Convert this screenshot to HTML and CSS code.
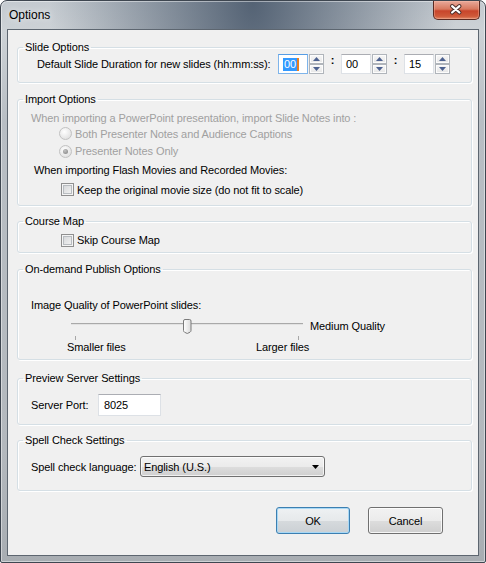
FILE: index.html
```html
<!DOCTYPE html>
<html>
<head>
<meta charset="utf-8">
<title>Options</title>
<link rel="stylesheet" href="styles.css">
</head>
<body>
<div class="window">
  <div class="titlebar">
    <span class="title">Options</span>
    <div class="close">
      <svg width="47" height="19" viewBox="0 0 47 19">
        <path d="M19.5 5 L27 11.5 M27 5 L19.5 11.5" stroke="#4a2d2a" stroke-width="4.2" stroke-linecap="round" fill="none"/>
        <path d="M19.5 5 L27 11.5 M27 5 L19.5 11.5" stroke="#ffffff" stroke-width="2.2" stroke-linecap="round" fill="none"/>
      </svg>
    </div>
  </div>
  <div class="client">
    <fieldset class="group g-slide">
      <legend>Slide Options</legend>
      <div class="gbody">
        <div class="duration-row">
          <span class="dur-label">Default Slide Duration for new slides (hh:mm:ss):</span>
          <div class="spin">
            <div class="spin-input focused"><span class="sel">00</span><span class="caret"></span></div>
            <div class="spin-btns">
              <span class="sb"><svg width="7" height="4" viewBox="0 0 7 4"><path d="M0 4 L3.5 0 L7 4 Z" fill="#4d6290"/></svg></span>
              <span class="sb"><svg width="7" height="4" viewBox="0 0 7 4"><path d="M0 0 L3.5 4 L7 0 Z" fill="#4d6290"/></svg></span>
            </div>
          </div>
          <span class="colon">:</span>
          <div class="spin">
            <div class="spin-input">00</div>
            <div class="spin-btns">
              <span class="sb"><svg width="7" height="4" viewBox="0 0 7 4"><path d="M0 4 L3.5 0 L7 4 Z" fill="#4d6290"/></svg></span>
              <span class="sb"><svg width="7" height="4" viewBox="0 0 7 4"><path d="M0 0 L3.5 4 L7 0 Z" fill="#4d6290"/></svg></span>
            </div>
          </div>
          <span class="colon">:</span>
          <div class="spin">
            <div class="spin-input">15</div>
            <div class="spin-btns">
              <span class="sb"><svg width="7" height="4" viewBox="0 0 7 4"><path d="M0 4 L3.5 0 L7 4 Z" fill="#4d6290"/></svg></span>
              <span class="sb"><svg width="7" height="4" viewBox="0 0 7 4"><path d="M0 0 L3.5 4 L7 0 Z" fill="#4d6290"/></svg></span>
            </div>
          </div>
        </div>
      </div>
    </fieldset>

    <fieldset class="group g-import">
      <legend>Import Options</legend>
      <div class="gbody">
        <div class="row r-note disabled">When importing a PowerPoint presentation, import Slide Notes into :</div>
        <div class="row r-radio1 disabled"><span class="radio"></span><span>Both Presenter Notes and Audience Captions</span></div>
        <div class="row r-radio2 disabled"><span class="radio checked"></span><span>Presenter Notes Only</span></div>
        <div class="row r-flash">When importing Flash Movies and Recorded Movies:</div>
        <div class="row r-check"><span class="checkbox"></span><span>Keep the original movie size (do not fit to scale)</span></div>
      </div>
    </fieldset>

    <fieldset class="group g-map">
      <legend>Course Map</legend>
      <div class="gbody">
        <div class="row r-check"><span class="checkbox"></span><span>Skip Course Map</span></div>
      </div>
    </fieldset>

    <fieldset class="group g-publish">
      <legend>On-demand Publish Options</legend>
      <div class="gbody">
        <div class="row r-quality">Image Quality of PowerPoint slides:</div>
        <div class="slider-row">
          <div class="slider">
            <div class="track"></div>
            <svg class="thumb" width="9" height="15" viewBox="0 0 9 15">
              <defs>
                <linearGradient id="tg" x1="0" y1="0" x2="1" y2="0">
                  <stop offset="0" stop-color="#ffffff"/>
                  <stop offset="1" stop-color="#dadada"/>
                </linearGradient>
              </defs>
              <path d="M0.5 2 Q0.5 0.5 2 0.5 H6.5 Q8 0.5 8 2 V11.5 Q8 12.5 7 13.2 L4.25 14.5 L1.5 13.2 Q0.5 12.5 0.5 11.5 Z" fill="url(#tg)" stroke="#7a7a7a" stroke-width="1"/>
            </svg>
            <span class="tick t-left"></span>
            <span class="tick t-right"></span>
          </div>
          <span class="medium">Medium Quality</span>
        </div>
        <div class="row r-files"><span class="smaller">Smaller files</span><span>Larger files</span></div>
      </div>
    </fieldset>

    <fieldset class="group g-server">
      <legend>Preview Server Settings</legend>
      <div class="gbody">
        <div class="row r-port"><span class="port-label">Server Port:</span><div class="textbox">8025</div></div>
      </div>
    </fieldset>

    <fieldset class="group g-spell">
      <legend>Spell Check Settings</legend>
      <div class="gbody">
        <div class="row r-lang"><span class="lang-label">Spell check language:</span>
          <div class="combo"><span>English (U.S.)</span>
            <svg width="7" height="4" viewBox="0 0 7 4"><path d="M0 0 L7 0 L3.5 4 Z" fill="#000"/></svg>
          </div>
        </div>
      </div>
    </fieldset>

    <div class="buttons">
      <button class="btn default">OK</button>
      <button class="btn">Cancel</button>
    </div>
  </div>
</div>
</body>
</html>
```

FILE: styles.css
```css
* { box-sizing: border-box; }
html, body { margin: 0; padding: 0; }
body {
  width: 486px;
  height: 563px;
  overflow: hidden;
  background: #ffffff;
  font-family: "Liberation Sans", Arial, sans-serif;
  font-size: 11px;
  letter-spacing: -0.1px;
  color: #000;
}

.window {
  width: 486px;
  height: 563px;
  border: 1px solid #3e4650;
  border-radius: 7px 7px 2px 2px;
  padding: 0 6px 6px;
  display: flex;
  flex-direction: column;
  background:
    radial-gradient(ellipse 42% 70% at 52% 0%, rgba(64, 80, 100, 0.85), rgba(64, 80, 100, 0) 100%),
    linear-gradient(#c4cad0, #cdd2d6 30px, #b8bec4 120px, #b3b8bd 450px, #a8adb2);
  box-shadow: inset 0 0 0 1px rgba(255, 255, 255, 0.45);
}

.titlebar {
  height: 28px;
  display: flex;
  justify-content: space-between;
  align-items: flex-start;
}

.title {
  padding-left: 2px;
  margin-top: 7px;
  font-size: 12px;
  line-height: 15px;
  letter-spacing: 0;
  color: #000;
  text-shadow: 0 0 6px rgba(255, 255, 255, 0.9);
}

.close {
  width: 47px;
  height: 19px;
  margin-right: -1px;
  border: 1px solid #5b2a22;
  border-top: none;
  border-radius: 0 0 5px 5px;
  background: linear-gradient(#e9a99a, #d8795f 45%, #c8452b 55%, #cf5a3a 85%, #e08a6a);
  box-shadow: inset 0 0 0 1px rgba(255, 200, 180, 0.35);
  display: flex;
}
.close svg { display: block; margin-left: -1px; }

.client {
  height: 527px;
  border: 1px solid #5d6670;
  background: #f0f0f0;
  padding: 11px 6px 0 9px;
  display: flex;
  flex-direction: column;
}

.group {
  margin: 0;
  padding: 0;
  min-width: 0;
  border: 1px solid #d5dfe5;
  border-radius: 3px;
  box-shadow: inset 1px 1px 0 #ffffff, 1px 1px 0 #ffffff;
}
.group legend {
  margin-left: 5px;
  padding: 0 2px;
  line-height: 13px;
  font-size: 11px;
}

.g-slide .gbody { padding: 0 0 8px 19px; }
.g-import { margin-top: 10px; }
.g-import .gbody { padding: 4px 0 5px 13px; }
.g-map { margin-top: 9px; }
.g-map .gbody { padding: 2px 0 2px 13px; }
.g-publish { margin-top: 10px; }
.g-publish .gbody { padding: 21px 0 5px 13px; }
.g-server { margin-top: 12px; }
.g-server .gbody { padding: 9px 0 8px 13px; }
.g-spell { margin-top: 9px; }
.g-spell .gbody { padding: 9px 0 13px 13px; }

.row { display: flex; align-items: center; white-space: nowrap; }
.disabled { color: #a0a0a0; }

/* Slide options */
.duration-row { display: flex; align-items: center; height: 20px; }
.dur-label { width: 241px; white-space: nowrap; }
.spin { display: flex; align-items: stretch; height: 20px; }
.spin-input {
  width: 30px;
  height: 20px;
  border: 1px solid #dde1e6;
  border-top-color: #abadb3;
  background: #fff;
  padding-left: 4px;
  line-height: 18px;
  display: flex;
  align-items: center;
}
.spin-input.focused { border-color: #7eb4ea; border-top-color: #569de5; }
.sel { background: #3399ff; color: #fff; line-height: 13px; padding: 0 1px; }
.caret { width: 2px; height: 13px; background: #e67e22; }
.spin-btns { margin-left: 1px; width: 15px; display: flex; flex-direction: column; }
.sb {
  height: 10px;
  border: 1px solid #b0b5bb;
  background: linear-gradient(#f7f7f7, #e6e6e6);
  box-shadow: inset 0 0 0 1px #fcfcfc;
  display: flex;
  align-items: center;
  justify-content: center;
}
.sb svg { display: block; }
.colon { width: 17px; text-align: center; font-weight: bold; line-height: 12px; align-self: flex-start; }

/* Import */
.r-note { height: 15px; }
.r-radio1 { height: 17px; padding-left: 28px; }
.r-radio2 { height: 18px; padding-left: 28px; }
.r-flash { height: 19px; padding-left: 3px; }
.r-check { height: 21px; padding-left: 30px; }
.g-map .r-check { height: 20px; }

.radio {
  width: 13px;
  height: 13px;
  border-radius: 50%;
  border: 1px solid #c2c2c2;
  background: radial-gradient(circle at 40% 35%, #ffffff, #e4e4e4 70%, #d6d6d6);
  margin-right: 3px;
  display: flex;
  align-items: center;
  justify-content: center;
}
.radio.checked::after {
  content: "";
  width: 5px;
  height: 5px;
  border-radius: 50%;
  background: radial-gradient(circle at 40% 35%, #c4c4c4, #7d7d7d);
}

.checkbox {
  width: 13px;
  height: 13px;
  border: 1px solid #8f8f8f;
  background: linear-gradient(135deg, #d0d2d4, #f7f7f7);
  box-shadow: inset 0 0 0 1px #f4f4f4, inset 0 0 0 2px #b8bcc0;
  margin-right: 3px;
}

/* Publish */
.r-quality { height: 16px; }
.slider-row { display: flex; align-items: flex-start; height: 27px; }
.slider { position: relative; width: 232px; height: 27px; margin-left: 40px; }
.track {
  position: absolute;
  left: 0;
  right: 0;
  top: 10px;
  height: 2px;
  border-top: 1px solid #a9a9a9;
  border-bottom: 1px solid #e2e2e2;
}
.thumb { position: absolute; left: 112px; top: 6px; display: block; }
.tick { position: absolute; top: 23px; width: 1px; height: 4px; background: #a7a7a7; }
.t-left { left: 4px; }
.t-right { left: 227px; }
.medium { margin-left: 7px; margin-top: 6px; line-height: 14px; white-space: nowrap; }
.r-files { height: 14px; padding-left: 36px; }
.smaller { width: 189px; }

/* Server */
.r-port { height: 22px; }
.port-label { width: 67px; }
.textbox {
  width: 63px;
  height: 22px;
  border: 1px solid #dde1e6;
  border-top-color: #abadb3;
  background: #fff;
  padding-left: 5px;
  display: flex;
  align-items: center;
}

/* Spell */
.r-lang { height: 21px; }
.lang-label { width: 109px; }
.combo {
  width: 185px;
  height: 21px;
  border: 1px solid #707070;
  border-radius: 3px;
  background: linear-gradient(#f2f2f2, #ebebeb 50%, #dddddd 51%, #cfcfcf);
  box-shadow: inset 0 0 0 1px rgba(255, 255, 255, 0.7);
  padding: 0 5px 0 3px;
  display: flex;
  align-items: center;
  justify-content: space-between;
}
.combo svg { display: block; }

/* Buttons */
.buttons {
  margin-top: 16px;
  display: flex;
  justify-content: flex-end;
  gap: 18px;
  padding-right: 29px;
}
.btn {
  width: 75px;
  height: 27px;
  border: 1px solid #707070;
  border-radius: 3px;
  background: linear-gradient(#f2f2f2, #ebebeb 50%, #dddddd 51%, #cfcfcf);
  box-shadow: inset 0 0 0 1px rgba(255, 255, 255, 0.8);
  font-family: "Liberation Sans", Arial, sans-serif;
  font-size: 11px;
  letter-spacing: -0.1px;
  color: #000;
  padding: 0;
}
.btn.default {
  width: 74px;
  border-color: #3c7fb1;
  box-shadow: inset 0 0 0 1px #a8d8f5;
  background: linear-gradient(#eef1f3, #e6e9eb 50%, #d6dadd 51%, #cbd0d4);
}
```
